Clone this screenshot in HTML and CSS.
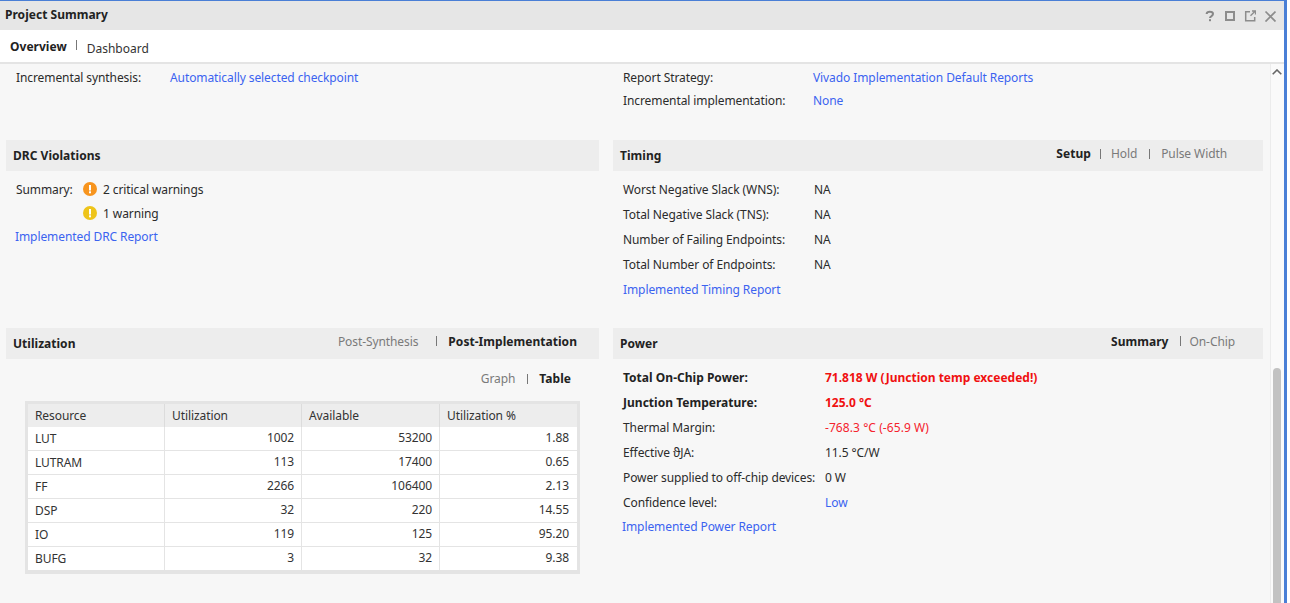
FILE: index.html
```html
<!DOCTYPE html>
<html lang="en">
<head>
<meta charset="utf-8">
<title>Project Summary</title>
<link rel="stylesheet" href="styles.css">
</head>
<body>
<div class="window">
  <header class="titlebar">
    <span class="title">Project Summary</span>
    <div class="winicons">
      <svg width="12" height="12" viewBox="0 0 12 12"><path d="M2.600 4C2.800 2.400 4 1.800 5.800 1.800 7.700 1.800 9 2.600 9 4 9 5.300 8.100 5.700 7.200 6.300 6.400 6.800 6 7.200 6 8" fill="none" stroke="#868686" stroke-width="2"/><rect x="5" y="9.200" width="2" height="2" fill="#868686"/></svg>
      <svg width="12" height="12" viewBox="0 0 12 12"><rect x="2" y="2" width="8" height="8" fill="none" stroke="#8c8c8c" stroke-width="2"/></svg>
      <svg width="12" height="12" viewBox="0 0 12 12"><path d="M6 1.700H1.700v9h9V7" fill="none" stroke="#8c8c8c" stroke-width="1.500"/><path d="M6.500 5.800 11 1.300M8 1h3.500v3.500" fill="none" stroke="#8c8c8c" stroke-width="1.300"/></svg>
      <svg width="12" height="12" viewBox="0 0 12 12"><path d="M1.500 1.500l10 10M11.500 1.500l-10 10" fill="none" stroke="#8c8c8c" stroke-width="1.700"/></svg>
    </div>
  </header>
  <nav class="tabs">
    <span class="tab tab-on">Overview</span>
    <span class="tab-sep"></span>
    <span class="tab tab-off">Dashboard</span>
  </nav>
  <div class="main">
    <div class="content">
      <section class="top-left">
        <div class="pair"><span class="lab-inc">Incremental synthesis:</span><a class="link">Automatically selected checkpoint</a></div>
      </section>
      <section class="top-right">
        <div class="pair pair-r"><span class="lab-rep">Report Strategy:</span><a class="link">Vivado Implementation Default Reports</a></div>
        <div class="pair pair-r"><span class="lab-rep">Incremental implementation:</span><a class="link">None</a></div>
      </section>

      <section class="panel">
        <div class="head"><span class="head-title">DRC Violations</span></div>
        <div class="drc">
          <div class="drc-row">
            <span class="drc-lab">Summary:</span>
            <svg class="warn" width="14" height="14" viewBox="0 0 14 14"><circle cx="7" cy="7" r="7" fill="#f7941d"/><rect x="6" y="3" width="2" height="5.500" fill="#fff"/><rect x="6" y="9.300" width="2" height="2" fill="#fff"/></svg>
            <span>2 critical warnings</span>
          </div>
          <div class="drc-row">
            <span class="drc-lab"></span>
            <svg class="warn" width="14" height="14" viewBox="0 0 14 14"><circle cx="7" cy="7" r="7" fill="#eec41a"/><rect x="6" y="3" width="2" height="5.500" fill="#fff"/><rect x="6" y="9.300" width="2" height="2" fill="#fff"/></svg>
            <span>1 warning</span>
          </div>
          <a class="link drc-link">Implemented DRC Report</a>
        </div>
      </section>

      <section class="panel">
        <div class="head">
          <span class="head-title">Timing</span>
          <div class="switch switch-timing">
            <span class="on">Setup</span><i class="sep-a"></i><span>Hold</span><i class="sep-e"></i><span>Pulse Width</span>
          </div>
        </div>
        <div class="timing">
          <div class="t-row"><span class="t-lab">Worst Negative Slack (WNS):</span><span>NA</span></div>
          <div class="t-row"><span class="t-lab">Total Negative Slack (TNS):</span><span>NA</span></div>
          <div class="t-row"><span class="t-lab">Number of Failing Endpoints:</span><span>NA</span></div>
          <div class="t-row"><span class="t-lab">Total Number of Endpoints:</span><span>NA</span></div>
          <div class="t-row"><a class="link">Implemented Timing Report</a></div>
        </div>
      </section>

      <section class="panel">
        <div class="head">
          <span class="head-title">Utilization</span>
          <div class="switch switch-util">
            <span>Post-Synthesis</span><i class="sep-c"></i><span class="on">Post-Implementation</span>
          </div>
        </div>
        <div class="switch graph-switch"><span>Graph</span><i class="sep-b"></i><span class="on">Table</span></div>
        <table class="util">
          <thead><tr><th>Resource</th><th>Utilization</th><th>Available</th><th>Utilization %</th></tr></thead>
          <tbody>
            <tr><td>LUT</td><td>1002</td><td>53200</td><td>1.88</td></tr>
            <tr><td>LUTRAM</td><td>113</td><td>17400</td><td>0.65</td></tr>
            <tr><td>FF</td><td>2266</td><td>106400</td><td>2.13</td></tr>
            <tr><td>DSP</td><td>32</td><td>220</td><td>14.55</td></tr>
            <tr><td>IO</td><td>119</td><td>125</td><td>95.20</td></tr>
            <tr><td>BUFG</td><td>3</td><td>32</td><td>9.38</td></tr>
          </tbody>
        </table>
      </section>

      <section class="panel">
        <div class="head">
          <span class="head-title">Power</span>
          <div class="switch switch-power">
            <span class="on">Summary</span><i class="sep-d"></i><span>On-Chip</span>
          </div>
        </div>
        <div class="power">
          <div class="p-row strong"><span class="p-lab">Total On-Chip Power:</span><span class="red">71.818 W (Junction temp exceeded!)</span></div>
          <div class="p-row strong"><span class="p-lab">Junction Temperature:</span><span class="red">125.0 °C</span></div>
          <div class="p-row"><span class="p-lab">Thermal Margin:</span><span class="red">-768.3 °C (-65.9 W)</span></div>
          <div class="p-row"><span class="p-lab">Effective ϑJA:</span><span>11.5 °C/W</span></div>
          <div class="p-row"><span class="p-lab">Power supplied to off-chip devices:</span><span>0 W</span></div>
          <div class="p-row"><span class="p-lab">Confidence level:</span><a class="link">Low</a></div>
          <a class="link p-link">Implemented Power Report</a>
        </div>
      </section>
    </div>
    <aside class="scrollbar">
      <svg class="chev" width="10" height="6" viewBox="0 0 10 6"><path d="M.7 5.300 5 1l4.300 4.300" fill="none" stroke="#666" stroke-width="1.600"/></svg>
      <div class="thumb"></div>
    </aside>
  </div>
</div>
</body>
</html>
```
FILE: styles.css
```css
* { box-sizing: border-box; }
html, body { margin: 0; padding: 0; height: 603px; overflow: hidden; background: #fff; }
body { font: 12px/17px "Noto Sans", sans-serif; letter-spacing: -0.09px; color: #2b2b2b; padding-right: 3px; }
.window { width: 1287px; height: 603px; display: flex; flex-direction: column; border-top: 1px solid #4a7fd6; border-right: 3px solid #4a7fd6; background: #f7f7f7; }
.titlebar { height: 29px; flex: none; background: #e6e6e6; display: flex; align-items: center; justify-content: space-between; padding: 0 8px 2px 5px; }
.title { font-weight: 700; color: #222; letter-spacing: 0.02px; }
.winicons { display: flex; gap: 8px; margin-top: 2px; }
.tabs { height: 32px; flex: none; background: #fff; display: flex; align-items: center; padding-left: 10px; }
.tab-on { font-weight: 700; color: #222; letter-spacing: 0.02px; }
.tab-sep { width: 1px; height: 10px; background: #777; margin: -2px 10px 0 9px; }
.tab-off { color: #333; margin-top: 5px; letter-spacing: 0; }
.main { flex: 1; min-height: 0; display: flex; border-top: 2px solid #e4e4e4; }
.content { flex: 1; min-width: 0; display: grid; grid-template-columns: 593px 650px; grid-template-rows: 76px 188px 1fr; column-gap: 14px; padding-left: 6px; align-content: start; overflow: hidden; }
.scrollbar { width: 14px; flex: none; border-left: 1px solid #ececec; background: #fafafa; display: flex; flex-direction: column; align-items: center; padding-top: 5px; }
.chev { flex: none; margin-left: -1px; }
.thumb { width: 8px; flex: 1; margin-top: 293px; margin-left: -1px; border-radius: 4px 4px 0 0; background: #c2c2c2; }
.link { color: #3b63f0; }
.pair { display: flex; height: 23px; align-items: center; }
.top-left { padding: 2px 0 0 10px; }
.top-right { padding: 2px 0 0 10px; }
.lab-inc { width: 154px; }
.lab-rep { width: 190px; }
.head { height: 31px; background: #ededed; display: flex; align-items: center; justify-content: space-between; padding: 0 7px; }
.head-title { font-weight: 700; color: #222; letter-spacing: 0.02px; }
.switch { display: flex; align-items: center; color: #7a7a7a; }
.switch .on { font-weight: 700; color: #222; letter-spacing: 0.04px; }
.switch i { width: 1px; height: 10px; background: #777; flex: none; }
.sep-a { margin: 0 10px 0 9px; }
.sep-b { margin: 0 11px 0 12px; }
.sep-c { margin: 0 11px 0 18px; }
.sep-d { margin: 0 9px 0 11px; }
.sep-e { margin: 0 11px 0 12px; }
.switch-timing { padding-right: 29px; margin-top: -4px; }
.switch-util { padding-right: 15px; margin-top: -5px; }
.switch-power { padding-right: 21px; margin-top: -5px; }
.drc { padding: 6px 0 0 10px; }
.drc-row { display: flex; align-items: center; height: 24px; }
.drc-lab { width: 67px; }
.warn { margin-right: 6px; flex: none; }
.drc-link { display: block; margin: 3px 0 0 -1px; }
.timing { padding: 6px 0 0 10px; }
.t-row { display: flex; height: 25px; align-items: center; }
.t-lab { width: 191px; }
.graph-switch { justify-content: flex-end; padding: 0 28px 3px 0; height: 42px; }
.util { border-collapse: separate; border-spacing: 0; width: 555px; margin-left: 19px; border: 3px solid #e4e4e4; border-bottom-width: 4px; table-layout: fixed; }
.util th { height: 23px; padding: 0 7px; font-weight: 400; text-align: left; background: #ededed; color: #333; border-left: 1px solid #dcdcdc; }
.util td { height: 24px; padding: 0 7px 2px; text-align: right; background: #fff; border-left: 1px solid #e4e4e4; border-bottom: 1px solid #e4e4e4; color: #333; }
.util tbody tr:last-child td { height: 23px; border-bottom: 0; }
.util th:first-child, .util td:first-child { border-left: 0; text-align: left; width: 136px; padding-bottom: 0; }
.util th:nth-child(2) { width: 137px; }
.util th:nth-child(3) { width: 138px; }
.util td:last-child { padding-right: 8px; }
.power { padding: 6px 0 0 10px; }
.p-row { display: flex; height: 25px; align-items: center; }
.p-lab { width: 202px; }
.strong { font-weight: 700; color: #222; letter-spacing: 0.02px; }
.red { color: #f5222d; letter-spacing: 0.07px; }
.strong .red { color: #f01010; letter-spacing: 0; }
.p-link { display: block; margin: 3px 0 0 -1px; }
```
